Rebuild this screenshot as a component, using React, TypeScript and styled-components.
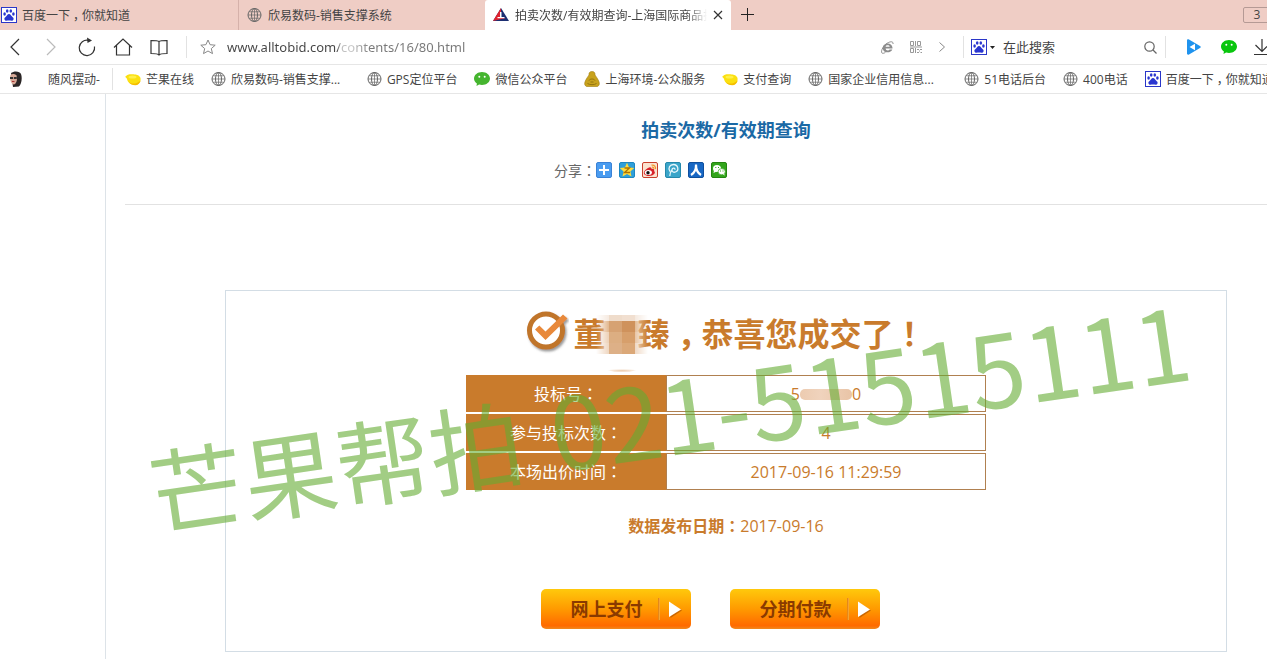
import React from "react";
import styled, { createGlobalStyle } from "styled-components";

const ui = `"Open Sans", "Noto Sans CJK SC", sans-serif`;
const orange = "#c97b2c";

const GlobalStyle = createGlobalStyle`
  * { box-sizing: border-box; }
  body { margin: 0; background: #fff; font-family: ${ui}; color: #444; font-size: 12px; }
  button, input { font-family: inherit; font-size: inherit; color: inherit; border: 0; background: none; padding: 0; outline: 0; }
  a { color: inherit; text-decoration: none; }
  svg { display: block; flex: none; }
`;

const Page = styled.div`
  position: relative;
  min-height: 100vh;
  display: flex;
  flex-direction: column;
  overflow: hidden;
`;

/* Full-width punctuation centred in its em box */
const Punct = styled.span`
  font-family: "Noto Sans CJK TC", sans-serif;
`;

/* Full-width comma: centred, but kept on the baseline */
const Comma = styled.span`
  display: inline-block;
  width: 1em;
  text-align: center;
  font-family: "Noto Sans CJK SC", sans-serif;
  font-feature-settings: "halt";
`;

/* ---------- browser chrome ---------- */

const TabBar = styled.div`
  display: flex;
  height: 30px;
  background: #efcdc5;
`;

const Tab = styled.button<{ $active?: boolean; $first?: boolean }>`
  flex: none;
  display: flex;
  align-items: center;
  gap: ${(p) => (p.$first ? 5 : 6)}px;
  width: ${(p) => (p.$first ? 239 : 246)}px;
  padding: 0 8px 0 ${(p) => (p.$first ? 1 : 8)}px;
  border-right: ${(p) => (p.$first ? "1px solid #d5b1aa" : "0")};
  border-radius: ${(p) => (p.$active ? "3px 3px 0 0" : "0")};
  background: ${(p) => (p.$active ? "#fff" : "transparent")};
  text-align: left;
`;

const TabTitle = styled.span<{ $fade?: boolean }>`
  flex: 1;
  overflow: hidden;
  white-space: nowrap;
  ${(p) => p.$fade && "mask-image: linear-gradient(90deg, #000 calc(100% - 20px), transparent);"}
`;

const NewTab = styled.button`
  width: 34px;
  display: grid;
  place-items: center;
`;

const TabCount = styled.button`
  margin: 7px -4px 7px auto;
  width: 28px;
  height: 16px;
  border: 1px solid #b59a95;
  border-radius: 2px;
  line-height: 14px;
`;

const Toolbar = styled.div`
  display: flex;
  align-items: center;
  height: 35px;
  padding-left: 4px;
  border-bottom: 1px solid #e6e6e6;
`;

const NavGroup = styled.div`
  display: flex;
  gap: 14px;
`;

const IconButton = styled.button<{ $w?: number }>`
  flex: none;
  display: grid;
  place-items: center;
  width: ${(p) => p.$w ?? 22}px;
  height: 24px;
`;

const Divider = styled.span<{ $before?: number; $after?: number }>`
  flex: none;
  width: 1px;
  height: 22px;
  margin-left: ${(p) => p.$before ?? 0}px;
  margin-right: ${(p) => p.$after ?? 0}px;
  background: #e2e2e2;
`;

const AddressInput = styled.input`
  flex: 1;
  min-width: 0;
  margin-left: 8px;
  font-family: "Noto Sans", sans-serif;
  font-size: 13px;
  line-height: 20px;
  color: transparent;
  background: linear-gradient(90deg, #444 110px, #bbb 114px, #ccc 124px, #777 144px);
  background-clip: text;
`;

const EngineButton = styled.button`
  flex: none;
  display: flex;
  align-items: center;
  gap: 3px;
`;

const SearchInput = styled.input`
  flex: none;
  width: 136px;
  margin-left: 8px;
  font-size: 13px;
  &::placeholder { color: #444; opacity: 1; }
`;

const Bookmarks = styled.nav`
  display: flex;
  align-items: center;
  gap: 17px;
  height: 29px;
  padding-left: 8px;
  border-bottom: 1px solid #e6e6e6;
  white-space: nowrap;
`;

const Bookmark = styled.a<{ $wide?: boolean; $gap?: number }>`
  flex: none;
  display: flex;
  align-items: center;
  gap: ${(p) => p.$gap ?? 5}px;
  width: ${(p) => (p.$wide ? "139px" : "auto")};
`;

const BookmarkGroup = styled.div`
  display: flex;
  align-items: center;
  gap: 12px;
`;

/* ---------- site content ---------- */

const Main = styled.main`
  flex: 1;
  margin-left: 105px;
  padding-left: 19px;
  border-left: 1px solid #dde3e8;
`;

const ArticleHead = styled.header`
  display: flex;
  flex-direction: column;
  align-items: center;
  gap: 18px;
  height: 111px;
  padding: 22px 40px 0 100px;
  border-bottom: 1px solid #e2e2e2;
`;

const ArticleTitle = styled.h1`
  margin: 0;
  font-size: 18px;
  line-height: 28px;
  color: #1b69a5;
`;

const ShareBar = styled.div`
  display: flex;
  align-items: center;
  gap: 7px;
  width: 344px;
  height: 16px;
  font-size: 14px;
  color: #666;
`;

const ShareLabel = styled.span`
  margin-right: -7px;
`;

const Card = styled.section`
  margin: 85px 40px 7px 100px;
  padding-top: 20px;
  height: 362px;
  border: 1px solid #d3dde5;
  display: flex;
  flex-direction: column;
  align-items: center;
  color: ${orange};
`;

const Congrats = styled.h2`
  position: relative;
  display: flex;
  align-items: center;
  gap: 4px;
  margin: 0;
  height: 44px;
  font-size: 32px;
  line-height: 44px;
`;

const Masked = styled.span`
  display: inline-block;
  width: 32px;
`;

const Mosaic = styled.svg`
  position: absolute;
  left: 70px;
  top: 4px;
`;

const Results = styled.table`
  margin-top: 18px;
  width: 520px;
  border-collapse: separate;
  border-spacing: 0 2px;
  font-size: 16px;
  line-height: 24px;
  text-align: center;
`;

const Label = styled.th`
  width: 200px;
  height: 37px;
  padding: 0;
  background: ${orange};
  color: #fff;
  font-weight: 400;
`;

const Value = styled.td`
  height: 37px;
  padding: 0;
  border: 1px solid #b08050;
`;

const Smudge = styled.span`
  display: inline-block;
  width: 52px;
  height: 11px;
  border-radius: 5px;
  background: linear-gradient(90deg, #eccbb0, #f0d3bd 40%, #e9c4a6);
`;

const Published = styled.p`
  margin: 21px 0 0;
  font-size: 16px;
  line-height: 24px;
`;

const Actions = styled.div`
  display: flex;
  gap: 39px;
  margin: 51px 32px 0 0;
`;

const PayButton = styled.button`
  display: flex;
  align-items: center;
  width: 150px;
  height: 40px;
  padding-left: 30px;
  border-radius: 5px;
  background: linear-gradient(#ffc90c, #ff9a00 50%, #ff6a00 92%, #f08a20);
  color: #8a3a00;
  font-size: 18px;
  font-weight: 700;
  line-height: 24px;
  white-space: nowrap;
`;

const PaySplit = styled.span`
  width: 2px;
  height: 22px;
  margin: 0 9px 0 15px;
  background: linear-gradient(90deg, #d97a10, #ffb13d);
`;

const Watermark = styled.div`
  position: absolute;
  left: 157px;
  top: 438px;
  transform: rotate(-8.3deg);
  transform-origin: 0 100%;
  font-family: "Noto Sans CJK SC", sans-serif;
  font-size: 94px;
  line-height: 100px;
  white-space: nowrap;
  color: rgba(100, 172, 50, 0.6);
  pointer-events: none;
`;

const Phone = styled.span`
  margin-left: 8px;
  font-size: 100px;
`;

/* ---------- icons ---------- */

const Globe = () => (
  <svg width="15" height="16" viewBox="0 0 15 16" fill="none" stroke="#666" strokeWidth="1">
    <circle cx="7.5" cy="8" r="6.5" />
    <ellipse cx="7.5" cy="8" rx="3" ry="6.5" />
    <path d="M7.500 1.500v13M1 8h13M2 4.800h11M2 11.200h11" strokeWidth=".7" />
  </svg>
);

const Baidu = () => (
  <svg width="16" height="16" viewBox="0 0 16 16">
    <rect x=".5" y=".5" width="15" height="15" fill="#fff" stroke="#2a36c8" />
    <g fill="#2a36d0">
      <ellipse cx="3.6" cy="7" rx="1.3" ry="1.8" />
      <ellipse cx="6.2" cy="4" rx="1.3" ry="1.8" />
      <ellipse cx="9.8" cy="4" rx="1.3" ry="1.8" />
      <ellipse cx="12.4" cy="7" rx="1.3" ry="1.8" />
      <path d="M8 7c1.600 0 2 1.500 3 2.500s2 1.500 1.500 3c-.6 1.800-2.600 1-4.500 1s-3.900.8-4.500-1c-.5-1.500.5-2 1.500-3S6.400 7 8 7z" />
    </g>
  </svg>
);

const Lemon = () => (
  <svg width="16" height="16" viewBox="0 0 16 16">
    <path d="M.3 5.500C1.500 5 2 3.600 4.500 3.300 8 3 14 3 15.300 6.500c1.200 3.500-1.500 7.500-5 7.500C5.500 14 2.500 11 2 8 1.700 6.800.4 6.500.3 5.500z" fill="#fbe010" />
    <path d="M3.500 10.500c2.500 2.800 8 3 12.200-1-.8 3-2.900 4.700-5.400 4.700-3 0-5.600-1.500-6.800-3.700z" fill="#f5bd00" />
    <ellipse cx="7.500" cy="6" rx="4" ry="1.600" fill="#fff04a" />
  </svg>
);

const Chat = ({ color }: { color: string }) => (
  <svg width="16" height="16" viewBox="0 0 16 16">
    <path d="M8 1c4.400 0 8 2.900 8 6.500S12.400 14 8 14c-1 0-2-.1-2.900-.4L2.500 15l.4-2.600C1.100 11.200 0 9.500 0 7.500 0 3.900 3.600 1 8 1z" fill={color} />
    <circle cx="5.300" cy="5.700" r="1" fill="#fff" />
    <circle cx="10.700" cy="5.700" r="1" fill="#fff" />
  </svg>
);

const Badge = () => (
  <svg width="16" height="16" viewBox="0 0 16 16">
    <path d="M8 .5c2.500 0 3.300 1.800 3 3.500.9 1.500 2.500 3.300 3.500 5.500 1.500 3.500.8 5-1 6h-11c-1.800-1-2.500-2.500-1-6C2.500 7.300 4.100 5.500 5 4 4.700 2.300 5.500.5 8 .5z" fill="#c8a21c" stroke="#a07c10" strokeWidth=".6" />
    <path d="M3.500 12.500c2 1.500 7 1.500 9 0M5 9.500c1-2 5-2 6 0M6.500 11h3" fill="none" stroke="#8d6f10" strokeWidth=".9" />
  </svg>
);

const Avatar = () => (
  <svg width="16" height="16" viewBox="0 0 16 16">
    <path d="M3 2C6-.5 12 0 13 3c1.500 4 .5 10-2 12.500L5 16z" fill="#2b2626" />
    <path d="M2.500 4C4 2.500 7 2.500 8.500 4.500c1 3 .5 6-1 8-1.500 1.500-3 1-4-.5C2 9.500 1.800 6 2.500 4z" fill="#d8aa98" />
    <path d="M2 6h3v2H2zM5.800 6h3v2h-3z" fill="#333" />
    <path d="M4 10.500h2.500" stroke="#a33" />
  </svg>
);

const SiteLogo = () => (
  <svg width="16" height="14" viewBox="0 0 16 14">
    <path d="M8 0 16 13H0z" fill="#1c2f72" />
    <path d="M8 0V10L13 10 0 13z" fill="#e0222e" />
    <path d="M7 4h1.500v5h3v1.300H4.500V9H7z" fill="#fff" />
  </svg>
);

const stroke = { fill: "none", stroke: "#333", strokeWidth: 1.2 };
const frame = { width: 16, height: 16, viewBox: "0 0 16 16" };

const ShareIcon = ({ fill, edge, children }: { fill: string; edge: string; children: React.ReactNode }) => (
  <svg {...frame}>
    <rect x=".5" y=".5" width="15" height="15" rx="1.500" fill={fill} stroke={edge} />
    {children}
  </svg>
);

const Check = () => (
  <svg width="43" height="44" viewBox="0 0 43 44">
    <defs>
      <filter id="drop" x="-20%" y="-20%" width="150%" height="150%">
        <feDropShadow dx="1.500" dy="2" stdDeviation="1.300" floodColor="#555" floodOpacity=".6" />
      </filter>
    </defs>
    <g filter="url(#drop)">
      <circle cx="20" cy="19.500" r="16.500" fill="#fff" stroke="#c0742c" strokeWidth="5" />
      <path d="M9 18.500l4.300-4 6.200 6L37 3.500l4.500 4L19.500 29z" fill="#e8893a" />
    </g>
  </svg>
);

const mosaicCells = [
  ["#f6eae0", "#efdccb", "#f1dfd0", "#f5e9df"],
  ["#e2b78e", "#d6a273", "#cf925c", "#e3bb94"],
  ["#ecd0b6", "#dcae82", "#d79f6b", "#e8c6a6"],
  ["#eed6c0", "#ddb087", "#dba878", "#efd9c5"],
];

const NameMosaic = () => (
  <Mosaic width="52" height="60" viewBox="0 0 52 60" aria-hidden="true">
    <defs>
      <linearGradient id="fadeX">
        <stop offset="0" stopColor="#000" />
        <stop offset=".25" stopColor="#fff" />
        <stop offset=".75" stopColor="#fff" />
        <stop offset="1" stopColor="#000" />
      </linearGradient>
      <radialGradient id="spot">
        <stop offset="0" stopColor="#ecc8a8" />
        <stop offset="1" stopColor="#fff" />
      </radialGradient>
      <mask id="soft">
        <rect width="52" height="60" fill="url(#fadeX)" />
      </mask>
    </defs>
    <g mask="url(#soft)">
      {mosaicCells.map((row, y) =>
        row.map((c, x) => <rect key={`${x}-${y}`} x={x * 13} y={y === 0 ? 0 : y * 11 - 5} width="13" height={y === 0 ? 6 : 11} fill={c} />),
      )}
    </g>
    <path d="M8 54h36q-18 7-36 0z" fill="url(#spot)" />
  </Mosaic>
);

const PlayArrow = () => (
  <svg width="13" height="17" viewBox="0 0 13 17">
    <path d="M1.500 2 13 9.500 1.500 17z" fill="#a84e00" opacity=".6" />
    <path d="M0 .5 12 8.500 0 16z" fill="#fff" />
  </svg>
);

const bookmarks = [
  { id: "crm", icon: <Globe />, text: "欣易数码-销售支撑...", wide: true },
  { id: "gps", icon: <Globe />, text: "GPS定位平台" },
  { id: "wechat", icon: <Chat color="#45b52f" />, text: "微信公众平台" },
  { id: "env", icon: <Badge />, text: "上海环境-公众服务" },
  { id: "pay", icon: <Lemon />, text: "支付查询" },
  { id: "credit", icon: <Globe />, text: "国家企业信用信息...", wide: true },
  { id: "tel51", icon: <Globe />, text: "51电话后台" },
  { id: "tel400", icon: <Globe />, text: "400电话" },
];

export default function App() {
  return (
    <Page>
      <GlobalStyle />
      <TabBar>
        <Tab $first>
          <Baidu />
          <TabTitle>百度一下<Comma>，</Comma>你就知道</TabTitle>
        </Tab>
        <Tab>
          <Globe />
          <TabTitle>欣易数码-销售支撑系统</TabTitle>
        </Tab>
        <Tab $active>
          <SiteLogo />
          <TabTitle $fade>拍卖次数/有效期查询-上海国际商品拍</TabTitle>
          <svg width="10" height="10" viewBox="0 0 10 10" {...stroke}><path d="M1 1l8 8M9 1 1 9" /></svg>
        </Tab>
        <NewTab aria-label="新标签页">
          <svg width="14" height="14" viewBox="0 0 14 14" fill="none" stroke="#222" strokeWidth="1"><path d="M6.500 0v13M0 6.500h13" /></svg>
        </NewTab>
        <TabCount>3</TabCount>
      </TabBar>

      <Toolbar>
        <NavGroup>
          <IconButton aria-label="后退">
            <svg width="10" height="18" viewBox="0 0 10 18" {...stroke}><path d="M9 1 1 9l8 8" /></svg>
          </IconButton>
          <IconButton aria-label="前进">
            <svg width="10" height="18" viewBox="0 0 10 18" {...stroke} stroke="#bbb"><path d="M1 1l8 8-8 8" /></svg>
          </IconButton>
          <IconButton aria-label="刷新">
            <svg width="18" height="20" viewBox="0 0 18 20" {...stroke}>
              <path d="M16.500 9.500a7.700 7.700 0 1 1-6-6.200" />
              <path d="M9 .5l5 3-4.500 2.500z" fill="#333" stroke="none" />
            </svg>
          </IconButton>
          <IconButton aria-label="主页">
            <svg width="20" height="18" viewBox="0 0 20 18" {...stroke}><path d="M1 9.500 10 1l9 8.500M3.500 7.500v9.500h13V7.500" /></svg>
          </IconButton>
          <IconButton aria-label="收藏夹">
            <svg width="18" height="17" viewBox="0 0 18 17" {...stroke}><path d="M9 2.500V16M9 2.500C8 1.500 7 1.500 1 1.500v13c5 0 7 0 8 1.500 1-1.500 3-1.500 8-1.500v-13c-6 0-7 0-8 1z" /></svg>
          </IconButton>
        </NavGroup>
        <Divider $before={16} $after={10} />
        <IconButton aria-label="收藏">
          <svg {...frame} fill="none" stroke="#888"><path d="M8 1l2.100 4.700 5.100.5-3.900 3.400 1.200 5L8 12l-4.500 2.600 1.200-5L.8 6.200l5.100-.5z" /></svg>
        </IconButton>
        <AddressInput aria-label="地址" defaultValue="www.alltobid.com/contents/16/80.html" />
        <IconButton $w={26} aria-label="兼容模式">
          <svg width="13" height="13" viewBox="0 0 13 13">
            <path fillRule="evenodd" d="M11.500 7.600H4.600c.2 2.300 3.200 2.300 3.900.9h2.800C10 12.500 1.800 12.600 1.800 6.900c0-6 10-6.200 9.700.7zM8.700 5.700c-.2-1.900-3.800-1.900-4.100 0z" fill="#8c8c8c" />
            <path d="M12 3C12.500.2 9.500.3 6.500 2 2.500 4.500-.3 9.500.8 11.800c.6 1 2.400.4 3.600-.4" fill="none" stroke="#8c8c8c" />
          </svg>
        </IconButton>
        <IconButton $w={32} aria-label="二维码">
          <svg width="12" height="12" viewBox="0 0 12 12" fill="none" stroke="#999">
            <path d="M.5.5h3v4h-3zM5.500 0v5M7.500.5h3v4h-3zM0 6h12M.5 7.500h3v4h-3zM5.500 7v5M7 8.500h2M9 10h1M7 11.500h2M10 8.500h2M10.500 11.500H12" />
          </svg>
        </IconButton>
        <IconButton $w={20} aria-label="更多">
          <svg width="6" height="10" viewBox="0 0 6 10" fill="none" stroke="#888"><path d="M.5.5 5.500 5 .5 9.500" /></svg>
        </IconButton>
        <Divider $before={11} $after={7} />
        <EngineButton aria-label="搜索引擎">
          <Baidu />
          <svg width="5" height="3" viewBox="0 0 5 3"><path d="M0 0h5L2.500 3z" fill="#222" /></svg>
        </EngineButton>
        <SearchInput aria-label="搜索" placeholder="在此搜索" />
        <IconButton aria-label="开始搜索">
          <svg width="13" height="13" viewBox="0 0 13 13" {...stroke} stroke="#666"><circle cx="5.500" cy="5.500" r="4.700" /><path d="M9 9l3.500 3.500" /></svg>
        </IconButton>
        <Divider $before={4} $after={17} />
        <IconButton aria-label="播放器">
          <svg width="14" height="16" viewBox="0 0 14 16">
            <path d="M0 1.500C0 .3 1 0 2 .6l11 6.400c1 .6 1 1.400 0 2L2 15.400C1 16 0 15.700 0 14.500z" fill="#1f93ee" />
            <path d="M8 4.800v6.400L2.500 8z" fill="#fff" />
          </svg>
        </IconButton>
        <IconButton $w={48} aria-label="微信"><Chat color="#09c60e" /></IconButton>
        <IconButton $w={14} aria-label="下载">
          <svg width="14" height="17" viewBox="0 0 14 17" {...stroke}><path d="M9 0v12M2.500 6 9 12.500l5-5M1 15.500h13" /></svg>
        </IconButton>
      </Toolbar>

      <Bookmarks>
        <BookmarkGroup>
          <Bookmark href="#" $gap={24}><Avatar />随风摆动-</Bookmark>
          <Divider />
          <Bookmark href="#"><Lemon />芒果在线</Bookmark>
        </BookmarkGroup>
        {bookmarks.map((b) => (
          <Bookmark key={b.id} href="#" $wide={b.wide}>{b.icon}{b.text}</Bookmark>
        ))}
        <Bookmark href="#"><Baidu /><span>百度一下<Comma>，</Comma>你就知道</span></Bookmark>
      </Bookmarks>

      <Main>
        <ArticleHead>
          <ArticleTitle>拍卖次数/有效期查询</ArticleTitle>
          <ShareBar>
            <ShareLabel>分享<Punct>：</Punct></ShareLabel>
            <a href="#" aria-label="更多分享">
              <ShareIcon fill="#4a9cf0" edge="#3a82d6"><path d="M8 3v10M3 8h10" stroke="#fff" strokeWidth="2" /></ShareIcon>
            </a>
            <a href="#" aria-label="QQ空间">
              <ShareIcon fill="#2e9fda" edge="#1d86c0">
                <path d="M8 .8l2.100 4.700 5.100.5-3.800 3.500 1.100 5.100L8 12l-4.500 2.600 1.100-5.100L.8 6l5.100-.5z" fill="#ffdc3c" />
                <path d="M5.500 6h5l-5 4.500h5.500" fill="none" stroke="#b07200" strokeWidth="1.300" />
              </ShareIcon>
            </a>
            <a href="#" aria-label="新浪微博">
              <ShareIcon fill="#fbe3d0" edge="#c8402c">
                <path d="M6 6c2-1.500 4-.5 3.500 1 2-.6 3.500.5 2.500 2 2.500 1.500-.5 5-5 5-4 0-6.500-2.500-4.500-5C3.500 7.500 5 6.500 6 6z" fill="#d8232a" />
                <ellipse cx="6.300" cy="10.600" rx="3.600" ry="2.500" fill="#fff" />
                <circle cx="6" cy="10.800" r="1.700" fill="#111" />
                <path d="M9.500 3.200c3-.6 4.500 1.500 4 4M10 5.200c1.300-.2 2 .5 1.800 1.700" fill="none" stroke="#f29a2e" strokeWidth="1.200" />
              </ShareIcon>
            </a>
            <a href="#" aria-label="腾讯微博">
              <ShareIcon fill="#3aa5c9" edge="#2688ab">
                <path d="M5 9.500C2.500 6 5 2.500 8.500 2.500c4.500 0 6 6 2 7.500-2 .8-4-.5-3.500-2.500.5-2 3.500-1.500 2.800.3M7 8c-1.500 1.500-2 3.500-2.200 6" fill="none" stroke="#e6f6fb" strokeWidth="1.300" />
              </ShareIcon>
            </a>
            <a href="#" aria-label="人人网">
              <ShareIcon fill="#1767c4" edge="#0f4f9d"><path d="M8 2.500C8.200 8 6.500 11 3 13M8 2.500C8 8 9.500 11 13 13" fill="none" stroke="#fff" strokeWidth="2.200" /></ShareIcon>
            </a>
            <a href="#" aria-label="微信分享">
              <ShareIcon fill="#33a51c" edge="#258511">
                <ellipse cx="6" cy="6.500" rx="4" ry="3.500" fill="#fff" />
                <path d="M3 8.500l-.5 2.500L5.500 9.500z" fill="#fff" />
                <ellipse cx="10.700" cy="9.700" rx="3.600" ry="3.100" fill="#fff" stroke="#33a51c" strokeWidth=".7" />
                <path d="M12 12l1.500 1.700-.3-2.500z" fill="#fff" />
                <path d="M4.300 5.500h1M7 5.500h1M9 9h1M11.500 9h1" stroke="#33a51c" />
              </ShareIcon>
            </a>
          </ShareBar>
        </ArticleHead>

        <Card>
          <Congrats>
            <Check />
            <span>董<Masked />臻<Comma>，</Comma>恭喜您成交了<Punct>！</Punct></span>
            <NameMosaic />
          </Congrats>
          <Results>
            <tbody>
              <tr>
                <Label scope="row">投标号<Punct>：</Punct></Label>
                <Value>5<Smudge />0</Value>
              </tr>
              <tr>
                <Label scope="row">参与投标次数<Punct>：</Punct></Label>
                <Value>4</Value>
              </tr>
              <tr>
                <Label scope="row">本场出价时间<Punct>：</Punct></Label>
                <Value>2017-09-16 11:29:59</Value>
              </tr>
            </tbody>
          </Results>
          <Published><b>数据发布日期<Punct>：</Punct></b>2017-09-16</Published>
          <Actions>
            <PayButton>网上支付<PaySplit /><PlayArrow /></PayButton>
            <PayButton>分期付款<PaySplit /><PlayArrow /></PayButton>
          </Actions>
        </Card>
      </Main>

      <Watermark>芒果帮拍 <Phone>021-51515111</Phone></Watermark>
    </Page>
  );
}
